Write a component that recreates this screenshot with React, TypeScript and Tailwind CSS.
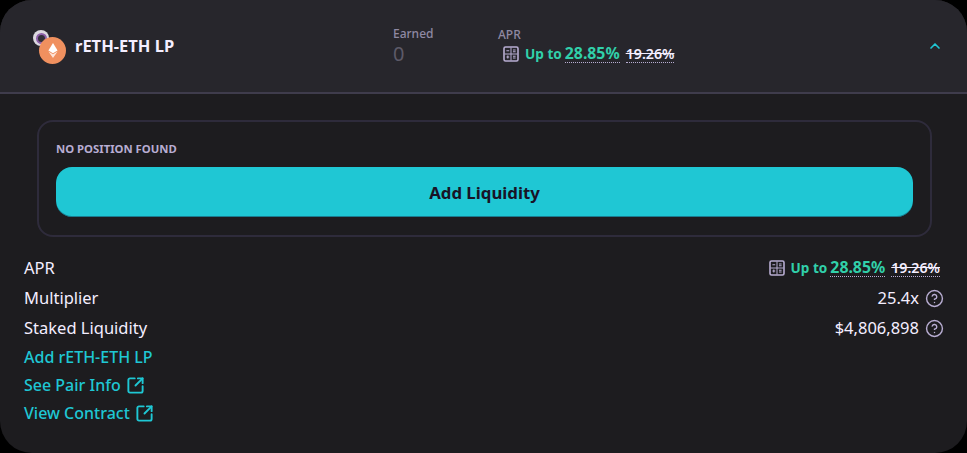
import React from 'react';
import { ChevronUp, CircleHelp, SquareArrowOutUpRight } from 'lucide-react';

const font = { fontFamily: '"Noto Sans", sans-serif' };

// filled rounded tile with the four calculator cells knocked out
const CalcIcon = ({ className }: { className?: string }) => (
  <svg viewBox="0 0 16 16" className={className} fill="none">
    <rect x="1" y="1" width="14" height="14" rx="1.5" stroke="currentColor" strokeWidth="1.6" />
    <path d="M8 1.5v13M1.5 8h13" stroke="currentColor" strokeWidth="1" />
    <path d="M3.4 4.8h2.8M10 4h2.6M10 5.8h2.6M3.4 11h2.8M4.8 9.6v2.8M10 10.2h2.6M10 12h2.6" stroke="currentColor" strokeWidth="1.1" />
  </svg>
);

const Apr = () => (
  <div className="flex items-center text-[13.6px] font-semibold leading-5">
    <CalcIcon className="mr-[6px] h-[16px] w-[16px] text-[#b8add2]" />
    <span className="mr-[3px] font-bold text-[#31d0aa]">Up to</span>
    <span className="border-b border-dotted border-[#b8add2] text-[15.8px] font-bold leading-[17px] text-[#31d0aa]">28.85%</span>
    <span className="ml-[6px] border-b border-dotted border-[#b8add2] text-[14.2px] font-semibold leading-[17px] text-[#f4eeff] line-through">19.26%</span>
  </div>
);

const Row = ({ label, value, help }: { label: string; value?: React.ReactNode; help?: boolean }) => (
  <div className={`flex h-[30px] items-center justify-between text-[16.5px] text-[#f4eeff] ${help ? '-mr-[1px]' : 'pr-[3px]'}`}>
    <span>{label}</span>
    <div className="flex items-center gap-[6px]">
      {value}
      {help && <CircleHelp className="h-[19px] w-[19px] text-[#b8add2]" strokeWidth={1.8} />}
    </div>
  </div>
);

const LinkRow = ({ label, ext }: { label: string; ext?: boolean }) => (
  <div className="flex h-[28px] items-center gap-[5px] text-[16px] font-medium text-[#1fc7d4]">
    <span>{label}</span>
    {ext && <SquareArrowOutUpRight className="h-[19px] w-[19px]" strokeWidth={2.4} />}
  </div>
);

export default function App() {
  return (
    <div className="h-[453px] w-[967px] overflow-hidden bg-black" style={font}>
      <div className="h-full overflow-hidden rounded-[32px] bg-[#1d1c1f]">
        <header className="flex h-[94px] items-center border-b-2 border-[#3f3c4c] bg-[#27262c] pl-[32px] pr-[24px]">
          <div className="flex w-[361px] items-center">
            <div className="relative h-[36px] w-[36px]">
              <span className="absolute left-[1px] top-[2px] flex h-[16px] w-[16px] items-center justify-center rounded-full bg-[#dcd8e0]">
                <span className="h-[11px] w-[11px] rounded-full border-2 border-[#8d5fa8] bg-[#33303a]" />
              </span>
              <span className="absolute bottom-0 right-[2px] flex h-[27px] w-[27px] items-center justify-center rounded-full bg-[#f0905f]">
                <svg viewBox="0 0 12 18" className="h-[15px] w-[10px]">
                  <path d="M6 0 11.5 9 6 12.3.5 9Z" fill="#fff" />
                  <path d="M6 13.6 11.5 10.3 6 18 .5 10.3Z" fill="#fde4d8" />
                </svg>
              </span>
            </div>
            <span className="ml-[7px] text-[16.5px] font-bold text-[#f4eeff]">rETH-ETH LP</span>
          </div>
          <div className="mt-[-1px] w-[105px]">
            <p className="text-[12px] font-medium leading-4 text-[#8f89a3]">Earned</p>
            <p className="text-[20px] leading-6 text-[#5d5a68]">0</p>
          </div>
          <div className="mt-[-1px]">
            <p className="text-[12px] font-medium leading-4 text-[#8f89a3]">APR</p>
            <div className="mt-[1px] pl-[5px]"><Apr /></div>
          </div>
          <ChevronUp className="ml-auto h-[16px] w-[16px] text-[#1fc7d4]" strokeWidth={2.5} />
        </header>
        <section className="px-[24px] pt-[26px]">
          <div className="ml-[13px] mr-[11px] h-[117px] rounded-[16px] border-2 border-[#2e2b3b] px-[17px] pt-[19px]">
            <p className="text-[11.3px] font-bold leading-4 text-[#b8add2]">NO POSITION FOUND</p>
            <button className="mt-[10px] h-[50px] w-full rounded-[16px] bg-[#1fc7d4] pt-[1px] text-[16.8px] font-bold text-[#191326] shadow-[inset_0_-1px_0_rgba(14,14,44,0.4)]">Add Liquidity</button>
          </div>
          <div className="mt-[16px]">
            <Row label="APR" value={<Apr />} />
            <Row label="Multiplier" value="25.4x" help />
            <Row label="Staked Liquidity" value="$4,806,898" help />
            <LinkRow label="Add rETH-ETH LP" />
            <LinkRow label="See Pair Info" ext />
            <LinkRow label="View Contract" ext />
          </div>
        </section>
      </div>
    </div>
  );
}
